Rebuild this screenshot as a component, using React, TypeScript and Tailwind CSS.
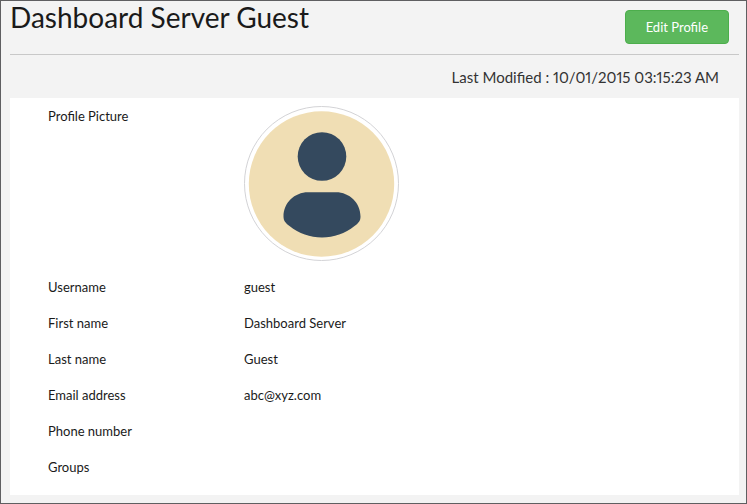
const details = [
  { label: "Username", value: "guest" },
  { label: "First name", value: "Dashboard Server" },
  { label: "Last name", value: "Guest" },
  { label: "Email address", value: "abc@xyz.com" },
  { label: "Phone number", value: "" },
  { label: "Groups", value: "" },
];

const Avatar = () => {
  return (
    <svg
      viewBox="0 0 155 155"
      className="block w-[155px] h-[155px]"
      role="img"
      aria-label="Profile picture"
    >
      <circle cx="77.5" cy="77.5" r="77" fill="#ffffff" stroke="#d3d3d6" />
      <circle cx="77.5" cy="78" r="72.7" fill="#f0deb4" />
      <circle cx="78" cy="50.5" r="24.3" fill="#34495e" />
      <path
        d="M64 86.300H92C105.500 86.300 116.500 97 116.500 110.500C116.500 115 114.500 117 110.500 120C101 127.500 90 131.500 78 131.500C66 131.500 55 127.500 45.500 120C41.500 117 39.500 115 39.500 110.500C39.500 97 50.500 86.300 64 86.300Z"
        fill="#34495e"
      />
    </svg>
  );
};

const App = () => {
  return (
    <div className="min-h-screen border border-[#5f5f61] bg-[#f3f3f3] pl-[9px] pr-[7px] pb-2 font-['Lato',sans-serif] text-[#1a1a1a]">

      {/* HEADER */}
      <header className="flex items-start justify-between border-b border-[#c8c8c8] pb-[10px] pr-[10px]">
        <h1 className="text-[28px] leading-[32px]">Dashboard Server Guest</h1>
        <button
          type="button"
          className="mt-[9px] h-[34px] rounded-[4px] border border-[#4cae4c] bg-[#5cb85c] px-5 text-[13px] leading-[18px] text-white"
        >
          Edit Profile
        </button>
      </header>

      <p className="pt-[13px] pb-[12px] pr-5 text-right text-[15px] leading-[18px] proportional-nums text-[#333333]">
        Last Modified : 10/01/2015 03:15:23 AM
      </p>

      {/* PROFILE DETAILS */}
      <main className="bg-white px-[38px] pb-[10px] text-[13px] leading-[18px]">
        <dl>
          <div className="flex py-2">
            <dt className="w-[196px] shrink-0 pt-px">Profile Picture</dt>
            <dd>
              <Avatar />
            </dd>
          </div>

          {details.map((item) => (
            <div key={item.label} className="flex py-[9px]">
              <dt className="w-[196px] shrink-0">{item.label}</dt>
              <dd>{item.value}</dd>
            </div>
          ))}
        </dl>
      </main>
    </div>
  );
};

export default App;
